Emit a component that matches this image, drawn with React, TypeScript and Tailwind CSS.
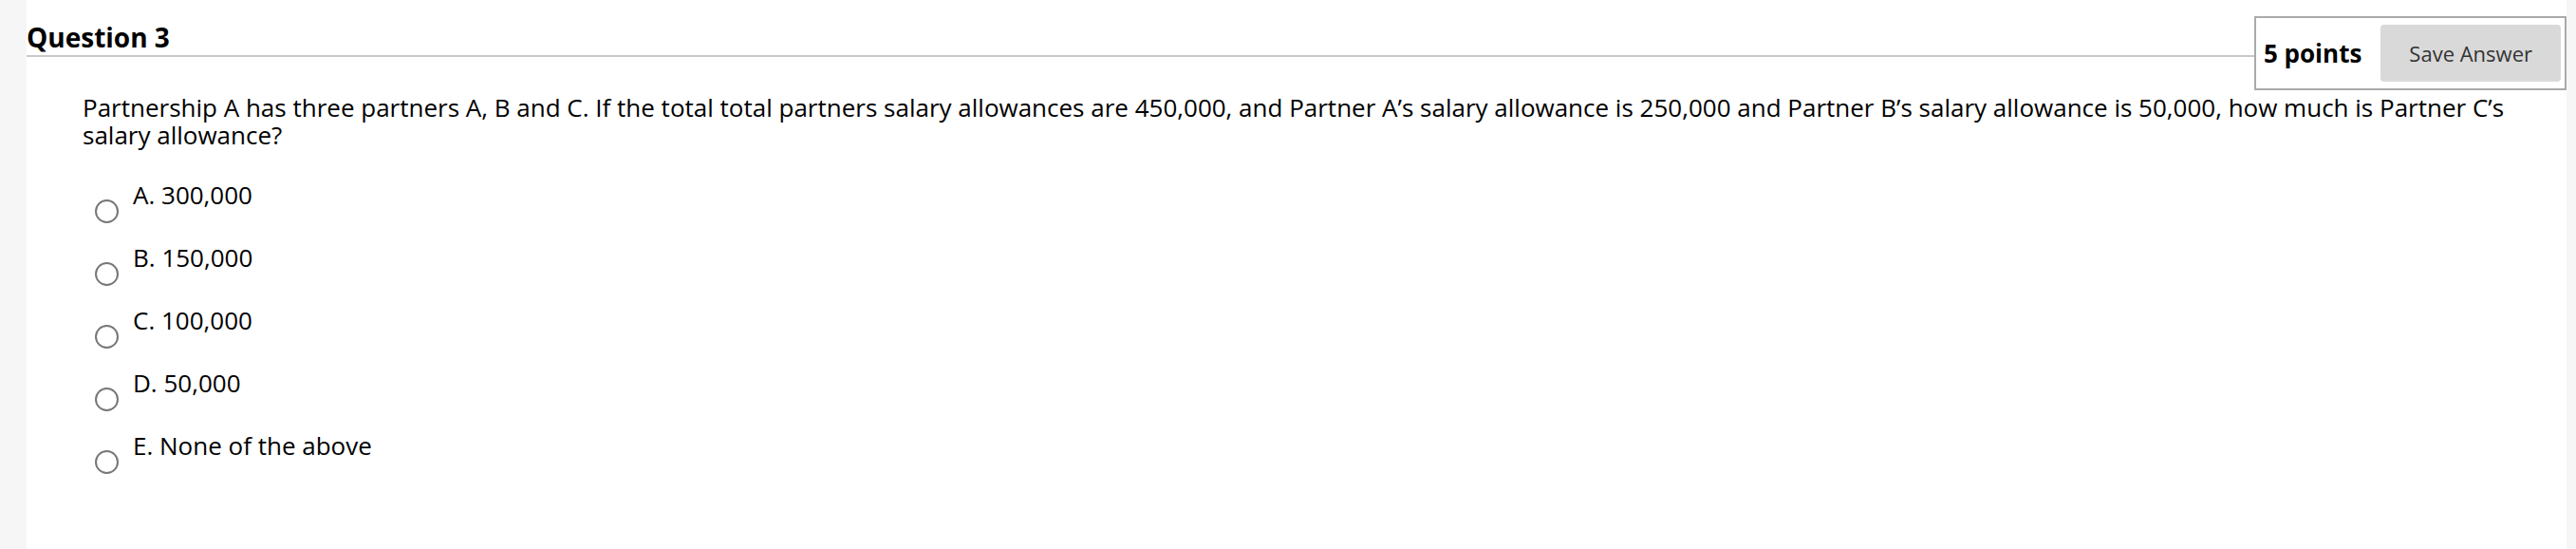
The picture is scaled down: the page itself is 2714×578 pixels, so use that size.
const options = ['A. 300,000', 'B. 150,000', 'C. 100,000', 'D. 50,000', 'E. None of the above']

export default function App() {
  return (
    <div
      className="flex h-[578px] w-full bg-[#f6f6f6] pl-[28px] pr-[10px] text-black"
      style={{ fontFamily: '"Open Sans", "Noto Sans", sans-serif' }}
    >
      <div className="flex flex-1 flex-col bg-white">
        {/* header */}
        <div className="flex items-start">
          <div className="h-[60px] flex-1 border-b-2 border-[#c8c8c8] pt-[25px]">
            <h2 className="text-[28px] font-bold leading-[29px]">Question 3</h2>
          </div>
          <div className="mt-[17px] flex items-center gap-[20px] border-2 border-[#aaaaaa] py-[7px] pl-[8px] pr-[4px]">
            <span className="text-[26px] font-bold leading-[29px]">5 points</span>
            <button className="h-[60px] rounded-[4px] bg-[#d9d9d9] px-[30px] text-[22px] text-[#333]">
              Save Answer
            </button>
          </div>
        </div>

        {/* question */}
        <p className="mt-[4px] pl-[59px] pr-[30px] text-[26px] leading-[29px]">
          Partnership A has three partners A, B and C. If the total total partners salary allowances are 450,000, and
          Partner A’s salary allowance is 250,000 and Partner B’s salary allowance is 50,000, how much is Partner C’s
          salary allowance?
        </p>

        {/* answers */}
        <div className="mt-[34px] flex flex-col pl-[72px]">
          {options.map((o) => (
            <label key={o} className="flex h-[66px] items-start gap-[15px]">
              <input
                type="radio"
                name="q3"
                className="mt-[19px] h-[25px] w-[25px] shrink-0 appearance-none rounded-full border-2 border-[#777777] bg-white"
              />
              <span className="text-[26px] leading-[29px]">{o}</span>
            </label>
          ))}
        </div>
      </div>
    </div>
  )
}
